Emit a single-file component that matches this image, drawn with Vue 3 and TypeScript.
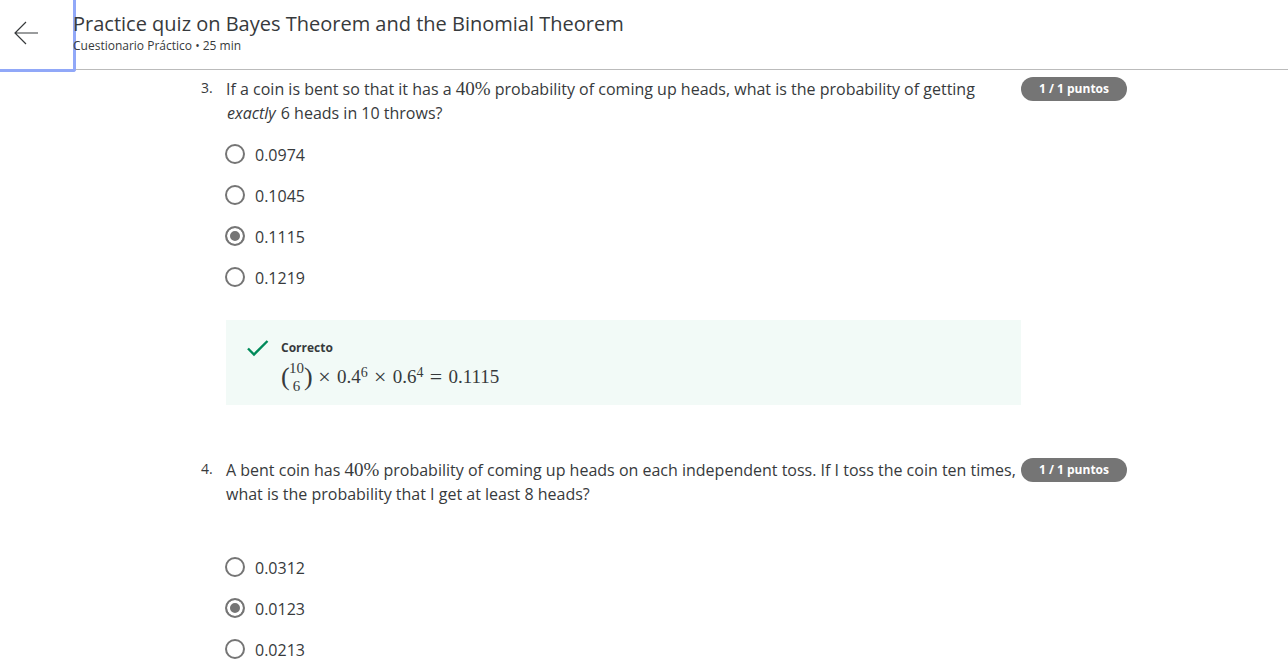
<script setup lang="ts">
import { reactive } from 'vue'

interface Question {
  id: number
  before: string
  after: string
  emphasis?: string
  tail?: string
  options: string[]
  spaced: boolean
  feedback: boolean
}

const questions: Question[] = [
  {
    id: 3,
    before: 'If a coin is bent so that it has a ',
    after: ' probability of coming up heads, what is the probability of getting ',
    emphasis: 'exactly',
    tail: ' 6 heads in 10 throws?',
    options: ['0.0974', '0.1045', '0.1115', '0.1219'],
    spaced: false,
    feedback: true,
  },
  {
    id: 4,
    before: 'A bent coin has ',
    after:
      ' probability of coming up heads on each independent toss. If I toss the coin ten times, what is the probability that I get at least 8 heads?',
    options: ['0.0312', '0.0123', '0.0213'],
    spaced: true,
    feedback: false,
  },
]

const answers = reactive<Record<number, string>>({ 3: '0.1115', 4: '0.0123' })
</script>

<template>
  <div class="page">
    <header class="header">
      <button class="back" type="button" aria-label="Back">
        <svg width="24" height="24" viewBox="0 0 24 24" fill="none" stroke="currentColor" stroke-width="1.2">
          <path d="M24 12H1M12 1L1 12l11 11" />
        </svg>
      </button>
      <div class="heading">
        <h1 class="title">Practice quiz on Bayes Theorem and the Binomial Theorem</h1>
        <p class="subtitle">Cuestionario Práctico • 25 min</p>
      </div>
    </header>

    <main class="content">
      <section v-for="q in questions" :key="q.id" class="question">
        <span class="number">{{ q.id }}.</span>
        <div class="body">
          <p :id="`prompt-${q.id}`" class="prompt">{{ q.before }}<span class="math">40%</span>{{ q.after }}<em v-if="q.emphasis">{{ q.emphasis }}</em>{{ q.tail }}</p>
          <div class="options" :class="{ spaced: q.spaced }" role="radiogroup" :aria-labelledby="`prompt-${q.id}`">
            <label v-for="option in q.options" :key="option" class="option">
              <input v-model="answers[q.id]" class="radio" type="radio" :name="`question-${q.id}`" :value="option" />
              <span>{{ option }}</span>
            </label>
          </div>
          <div v-if="q.feedback" class="feedback">
            <svg class="check" width="22" height="18" viewBox="0 0 22 18" fill="none" stroke="#008a5a" stroke-width="2.4">
              <path d="M1 9.500l6 6L20.500 2" />
            </svg>
            <div>
              <p class="verdict">Correcto</p>
              <div class="math formula">
                <span class="binomial">
                  <span class="paren">(</span>
                  <span class="stack"><span>10</span><span>6</span></span>
                  <span class="paren">)</span>
                </span>
                <span class="operator">×</span>
                <span>0.4<sup>6</sup></span>
                <span class="operator">×</span>
                <span>0.6<sup>4</sup></span>
                <span class="operator">=</span>
                <span>0.1115</span>
              </div>
            </div>
          </div>
        </div>
        <span class="score">1 / 1 puntos</span>
      </section>
    </main>
  </div>
</template>

<style>
body {
  margin: 0;
  background: #fff;
}
</style>

<style scoped>
.page {
  display: flex;
  flex-direction: column;
  height: 100vh;
  overflow: hidden;
  color: #373a3c;
  font-family: "Open Sans", "Noto Sans", sans-serif;
  font-size: 16px;
  line-height: 24px;
}

h1,
p {
  margin: 0;
}

.header {
  display: flex;
  align-items: flex-start;
  flex: none;
  height: 69px;
  border-bottom: 1px solid #bbb;
}

.back {
  box-sizing: border-box;
  display: flex;
  align-items: center;
  width: 76px;
  height: 72px;
  margin-right: -3px;
  padding: 0 0 3px 14px;
  border: solid #91a8f8;
  border-width: 0 3px 3px 0;
  border-bottom-right-radius: 3px;
  background: #fff;
  color: #373a3c;
  cursor: pointer;
}

.heading {
  z-index: 1;
  padding-top: 10px;
}

.title {
  font-size: 20px;
  font-weight: 400;
  line-height: 28px;
}

.subtitle {
  font-size: 12px;
  line-height: 16px;
}

.content {
  flex: 1;
  min-height: 0;
  padding: 7px 161px 0 201px;
  overflow: hidden;
}

.question {
  display: grid;
  grid-template-columns: 25px 1fr 106px;
  align-items: start;
  margin-bottom: 53px;
}

.number {
  font-size: 14px;
  line-height: 22px;
}

.prompt em {
  padding: 0 1px;
}

.math {
  font-family: "Liberation Serif", serif;
  font-size: 19px;
  line-height: 20px;
}

.options {
  padding-top: 9px;
}

.options.spaced {
  padding-top: 41px;
}

.option {
  display: flex;
  align-items: center;
  gap: 10px;
  width: fit-content;
  height: 41px;
  margin-left: -1px;
  cursor: pointer;
}

.radio {
  appearance: none;
  box-sizing: border-box;
  width: 20px;
  height: 20px;
  margin: 0 0 2px;
  border: 2px solid #757575;
  border-radius: 50%;
  background: #fff;
}

.radio:checked {
  background: #757575;
  box-shadow: inset 0 0 0 3px #fff;
}

.feedback {
  display: flex;
  gap: 12px;
  margin-top: 22px;
  padding: 19px 21px 9px;
  background: #f2faf7;
}

.check {
  flex: none;
}

.verdict {
  font-size: 12px;
  font-weight: 700;
  line-height: 18px;
}

.formula {
  display: flex;
  align-items: center;
  gap: 6px;
  height: 39px;
  line-height: 39px;
}

.formula sup {
  font-size: 14px;
  line-height: 0;
  vertical-align: 6px;
}

.binomial {
  display: flex;
  align-items: center;
}

.paren {
  width: 8px;
  font-size: 26px;
  line-height: 34px;
}

.stack {
  display: flex;
  flex-direction: column;
  align-items: center;
  font-size: 15px;
  line-height: 18px;
}

.operator {
  width: 13px;
  text-align: center;
  font-size: 22px;
}

.score {
  border-radius: 12px;
  background: #757575;
  color: #fff;
  font-size: 12px;
  font-weight: 700;
  text-align: center;
}
</style>
